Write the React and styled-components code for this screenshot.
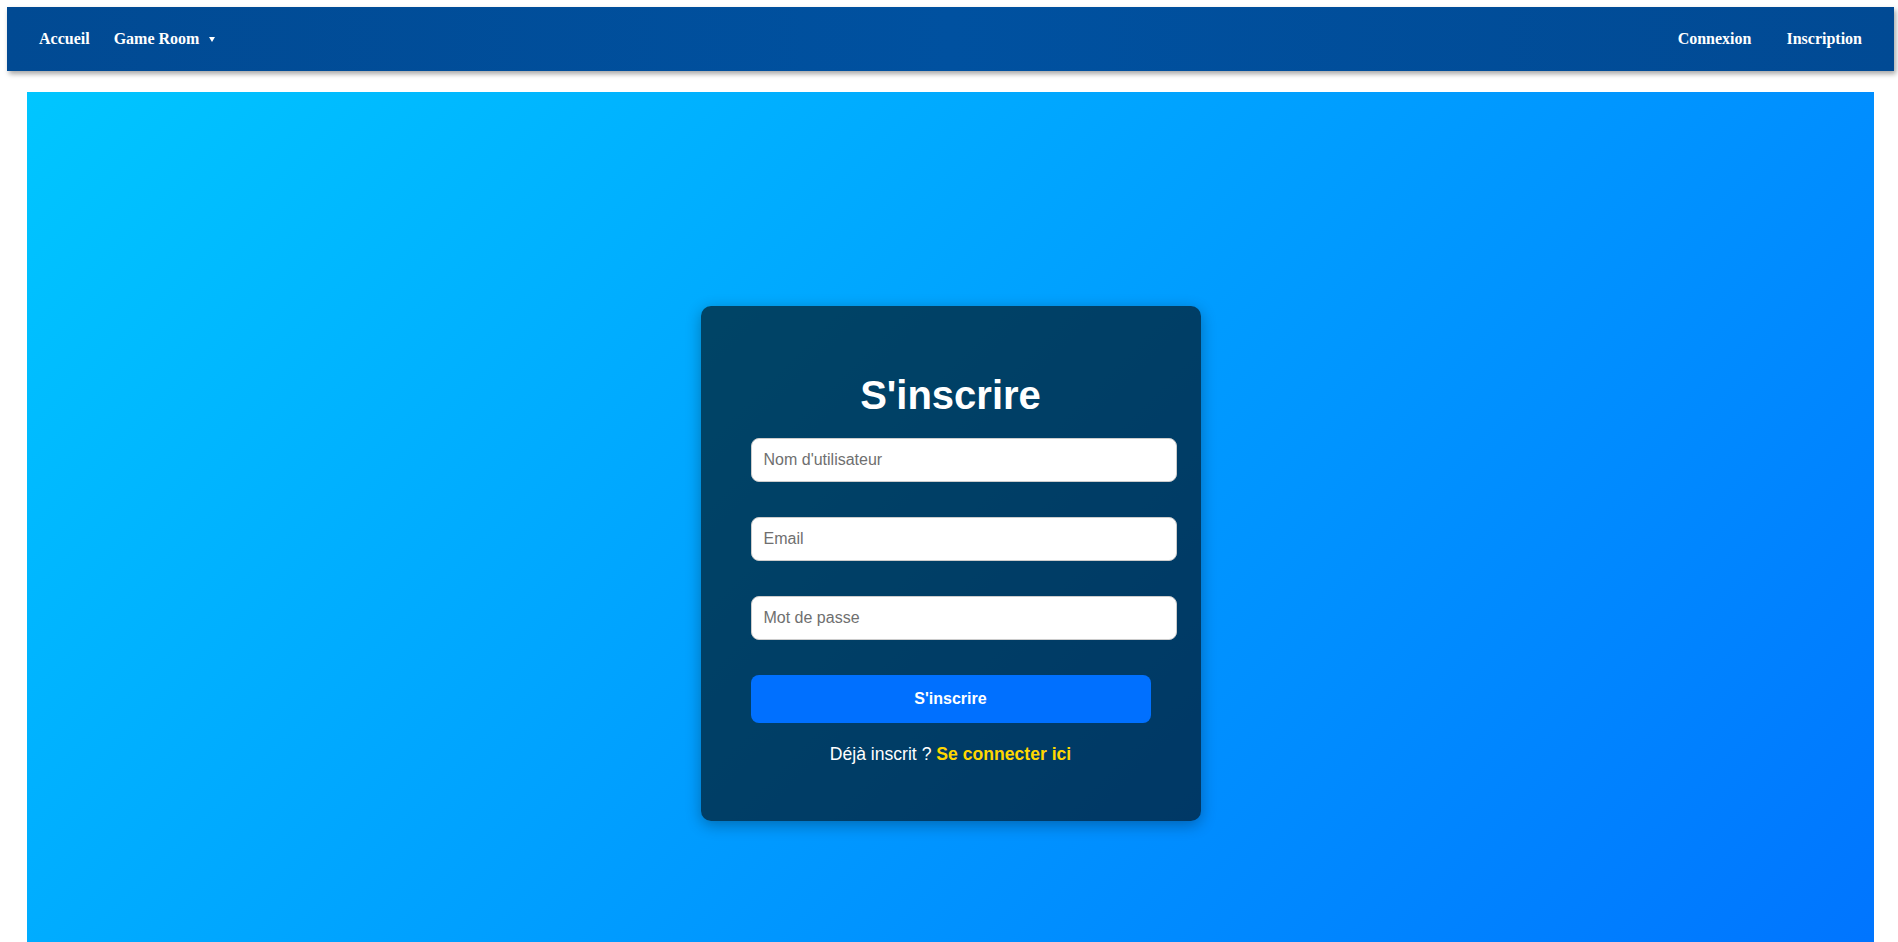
import React, { useState } from 'react';
import styled, { createGlobalStyle } from 'styled-components';

const GlobalStyle = createGlobalStyle`
  * {
    box-sizing: border-box;
  }

  body {
    margin: 0;
    background-color: #ffffff;
    font-family: 'Liberation Sans', Arial, sans-serif;
  }
`;

const Page = styled.div`
  padding: 7px 4px 0 7px;
`;

const NavBar = styled.nav`
  height: 64px;
  display: flex;
  align-items: center;
  justify-content: space-between;
  padding: 0 32px;
  background: linear-gradient(90deg, #014a93, #0051a0 50%, #014a94);
  box-shadow: 2px 3px 5px rgba(0, 0, 0, 0.35);
`;

const NavGroup = styled.div`
  display: flex;
  align-items: center;
  gap: ${props => props.gap}px;
`;

const NavLink = styled.a`
  font-family: 'Liberation Serif', 'Times New Roman', serif;
  font-weight: bold;
  font-size: 16px;
  color: #ffffff;
  text-decoration: none;
  cursor: pointer;
  display: flex;
  align-items: center;
`;

const Caret = styled.span`
  margin-left: 10px;
  width: 0;
  height: 0;
  border-left: 3px solid transparent;
  border-right: 3px solid transparent;
  border-top: 5px solid #ffffff;
`;

const Hero = styled.main`
  margin: 21px 20px 0 20px;
  height: 100vh;
  display: flex;
  align-items: center;
  justify-content: center;
  background: linear-gradient(135deg, #00c6ff, #0072ff);
`;

const Card = styled.div`
  width: 500px;
  padding: 50px 50px 57px;
  border-radius: 10px;
  background-color: rgba(0, 0, 0, 0.6);
  box-shadow: 0 4px 15px rgba(0, 0, 0, 0.3);
  color: #ffffff;
  text-align: center;
`;

const Title = styled.h2`
  margin: 16px 0 20px;
  font-size: 40px;
  font-weight: bold;
  line-height: 46px;
`;

const Form = styled.form`
  display: flex;
  flex-direction: column;
  gap: 35px;
`;

const Input = styled.input`
  box-sizing: content-box;
  width: 100%;
  height: 42px;
  padding: 0 12px;
  border: 1px solid #cccccc;
  border-radius: 8px;
  background-color: #ffffff;
  font-family: 'Liberation Sans', Arial, sans-serif;
  font-size: 16px;
  color: #222222;
  outline: none;

  &::placeholder {
    color: #6f6f6f;
  }
`;

const SubmitButton = styled.button`
  width: 100%;
  height: 48px;
  border: none;
  border-radius: 8px;
  background-color: #0070ff;
  color: #ffffff;
  font-family: 'Liberation Sans', Arial, sans-serif;
  font-size: 16px;
  font-weight: bold;
  cursor: pointer;
`;

const Footer = styled.p`
  margin: 21px 0 0;
  font-size: 17.6px;
  line-height: 20px;
`;

const LoginLink = styled.a`
  color: #ffd700;
  font-weight: bold;
  text-decoration: none;
  cursor: pointer;
`;

const Register = () => {
  const [form, setForm] = useState({ username: '', email: '', password: '' });

  const update = field => e => setForm({ ...form, [field]: e.target.value });

  return (
    <Page>
      <GlobalStyle />
      <NavBar>
        <NavGroup gap={24}>
          <NavLink>Accueil</NavLink>
          <NavLink>
            Game Room <Caret />
          </NavLink>
        </NavGroup>
        <NavGroup gap={35}>
          <NavLink>Connexion</NavLink>
          <NavLink>Inscription</NavLink>
        </NavGroup>
      </NavBar>
      <Hero>
        <Card>
          <Title>S'inscrire</Title>
          <Form onSubmit={e => e.preventDefault()}>
            <Input
              type="text"
              placeholder="Nom d'utilisateur"
              value={form.username}
              onChange={update('username')}
            />
            <Input
              type="email"
              placeholder="Email"
              value={form.email}
              onChange={update('email')}
            />
            <Input
              type="password"
              placeholder="Mot de passe"
              value={form.password}
              onChange={update('password')}
            />
            <SubmitButton type="submit">S'inscrire</SubmitButton>
          </Form>
          <Footer>
            Déjà inscrit ? <LoginLink>Se connecter ici</LoginLink>
          </Footer>
        </Card>
      </Hero>
    </Page>
  );
};

export default Register;
